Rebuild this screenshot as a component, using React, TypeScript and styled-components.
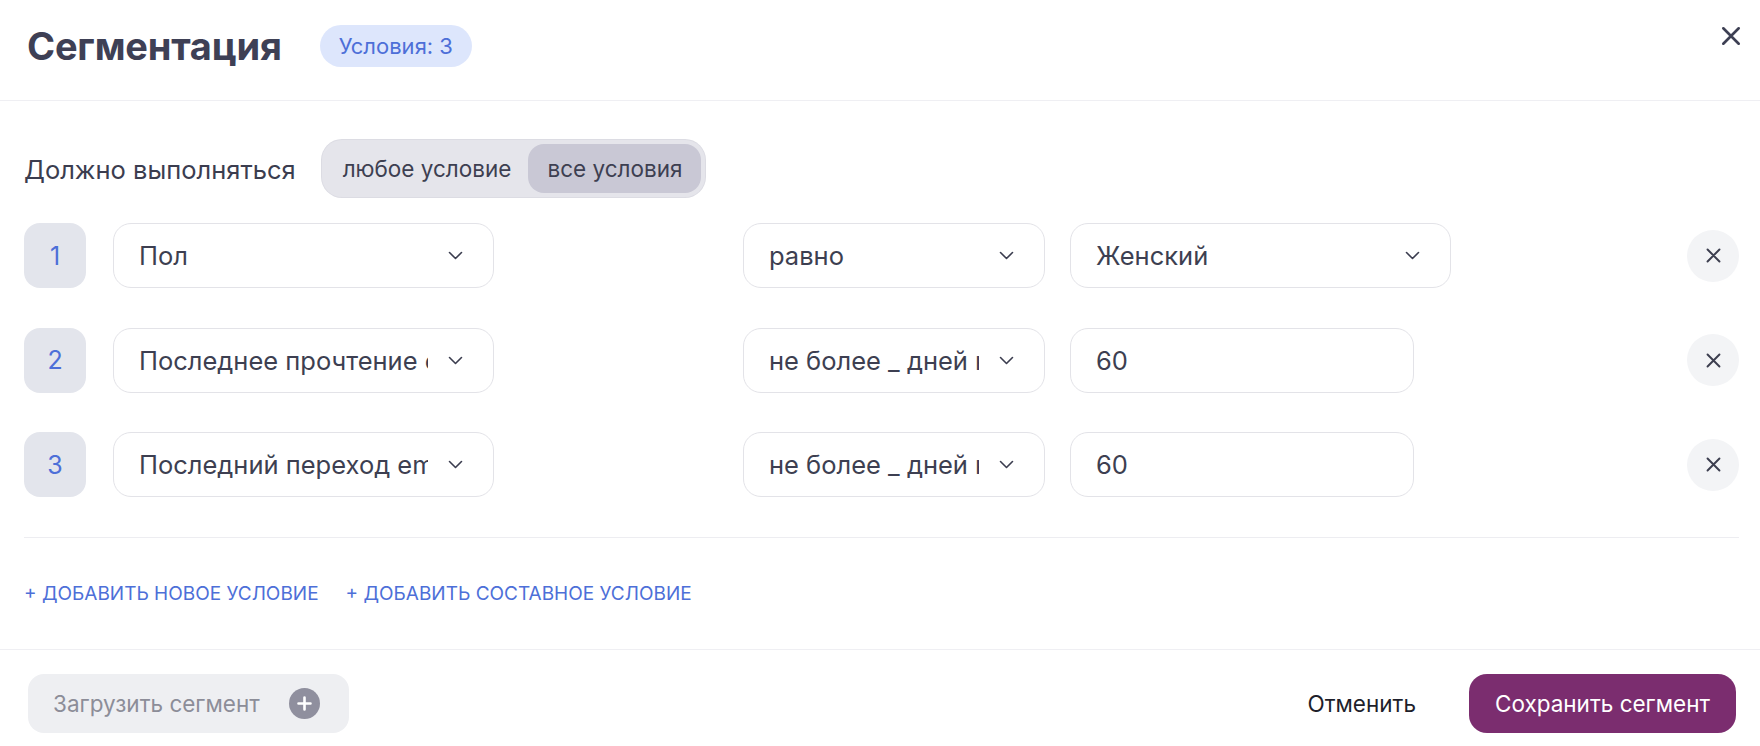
import React from "react";
import styled, { createGlobalStyle } from "styled-components";

const Global = createGlobalStyle`
  html, body { margin: 0; padding: 0; background: #ffffff; }
  body { font-family: Inter, "Noto Sans", "Liberation Sans", sans-serif; -webkit-font-smoothing: antialiased; }
  * { box-sizing: border-box; }
`;

const Modal = styled.div`
  width: 1760px;
  height: 746px;
  background: #fff;
  display: flex;
  flex-direction: column;
`;

const Header = styled.header`
  height: 101px;
  display: flex;
  align-items: center;
  padding: 0 13px 0 27px;
  border-bottom: 1px solid #efeff3;
`;

const Title = styled.h1`
  margin: 0;
  font-size: 38px;
  font-weight: 700;
  color: #3e4055;
  letter-spacing: -0.2px;
  margin-top: -9px;
`;

const Badge = styled.span`
  margin-left: 38px;
  margin-top: -9px;
  height: 42px;
  padding: 0 19px;
  border-radius: 21px;
  background: #dde6fc;
  color: #4d6fd8;
  font-size: 22px;
  display: inline-flex;
  align-items: center;
`;

const CloseButton = styled.button`
  margin-left: auto;
  margin-top: -28px;
  width: 32px;
  height: 32px;
  border: 0;
  background: transparent;
  padding: 0;
  display: flex;
  align-items: center;
  justify-content: center;
  color: #3d3f53;
`;

const Body = styled.section`
  padding: 39px 21px 0 24px;
  display: flex;
  flex-direction: column;
`;

const MatchRow = styled.div`
  display: flex;
  align-items: center;
  gap: 26px;
`;

const MatchLabel = styled.span`
  font-size: 25.5px;
  color: #3b3d4f;
  margin-top: 2px;
`;

const Toggle = styled.div`
  height: 57px;
  padding: 4px;
  border-radius: 20px;
  background: #e5e5eb;
  box-shadow: 0 0 0 1px #dcdce3;
  display: flex;
  align-items: stretch;
`;

const ToggleOption = styled.button<{ $active?: boolean }>`
  border: 0;
  font-family: inherit;
  font-size: 22.5px;
  color: #3d3f51;
  padding: 0 ${(p) => (p.$active ? 19 : 17)}px;
  border-radius: 16px;
  background: ${(p) => (p.$active ? "#c9c8d5" : "transparent")};
`;

const Conditions = styled.div`
  margin-top: 26px;
  display: flex;
  flex-direction: column;
  gap: 39.5px;
`;

const ConditionRow = styled.div`
  display: flex;
  align-items: center;
  height: 65px;
`;

const Num = styled.div`
  width: 62px;
  height: 65px;
  border-radius: 16px;
  background: #e3e5ec;
  color: #4d6fd8;
  font-size: 25px;
  display: flex;
  align-items: center;
  justify-content: center;
  margin-right: 27px;
`;

const Select = styled.div<{ $w: number; $ml?: number }>`
  width: ${(p) => p.$w}px;
  margin-left: ${(p) => p.$ml ?? 0}px;
  height: 65px;
  border: 1px solid #e3e3e8;
  border-radius: 18px;
  display: flex;
  align-items: center;
  padding: 0 30px 0 25px;
  gap: 20px;
  font-size: 25.5px;
  color: #3d3f51;
`;

const SelectText = styled.span`
  flex: 1;
  overflow: hidden;
  white-space: nowrap;
  text-overflow: clip;
`;

const Input = styled.div<{ $w: number; $ml?: number }>`
  width: ${(p) => p.$w}px;
  margin-left: ${(p) => p.$ml ?? 0}px;
  height: 65px;
  border: 1px solid #e3e3e8;
  border-radius: 18px;
  display: flex;
  align-items: center;
  padding: 0 25px;
  font-size: 25.5px;
  color: #3d3f51;
`;

const RemoveButton = styled.button`
  margin-left: auto;
  width: 52px;
  height: 52px;
  border-radius: 50%;
  border: 0;
  background: #f3f4f6;
  color: #3c3e4f;
  display: flex;
  align-items: center;
  justify-content: center;
  padding: 0;
`;

const Divider = styled.hr`
  margin: 40px 0 0;
  border: 0;
  border-top: 1px solid #ededf1;
`;

const Links = styled.div`
  display: flex;
  gap: 27px;
  height: 111px;
  align-items: center;
`;

const LinkButton = styled.button`
  border: 0;
  background: transparent;
  padding: 0;
  font-family: inherit;
  font-size: 19px;
  color: #4d6fd8;
  text-transform: uppercase;
`;

const Footer = styled.footer`
  border-top: 1px solid #efeff3;
  padding: 24px 24px 0 28px;
  display: flex;
  align-items: center;
`;

const LoadButton = styled.button`
  width: 321px;
  height: 59px;
  border: 0;
  border-radius: 16px;
  background: #eeeff2;
  font-family: inherit;
  font-size: 22.5px;
  color: #8c8d98;
  display: flex;
  align-items: center;
  padding: 0 29px 0 25px;
  justify-content: space-between;
`;

const CancelButton = styled.button`
  margin-left: auto;
  border: 0;
  background: transparent;
  font-family: inherit;
  font-size: 22.5px;
  color: #1e1f2b;
  padding: 0;
  margin-right: 53px;
`;

const SaveButton = styled.button`
  width: 267px;
  height: 59px;
  border: 0;
  border-radius: 18px;
  background: #7b2d6f;
  color: #fff;
  font-family: inherit;
  font-size: 22.5px;
`;

const Chevron = () => (
  <svg width="15" height="9" viewBox="0 0 15 9" fill="none">
    <polyline points="1.5,1.5 7.5,7.5 13.5,1.5" stroke="#3b3d4f" strokeWidth="1.6" strokeLinecap="round" strokeLinejoin="round" />
  </svg>
);

const XIcon = ({ size, sw }: { size: number; sw: number }) => (
  <svg width={size} height={size} viewBox="0 0 20 20" fill="none">
    <path d="M3 3L17 17M17 3L3 17" stroke="currentColor" strokeWidth={sw} strokeLinecap="round" />
  </svg>
);

const PlusCircle = () => (
  <svg width="31" height="31" viewBox="0 0 31 31">
    <circle cx="15.5" cy="15.5" r="15.5" fill="#8f8f9e" />
    <path d="M15.5 9.5V21.5M9.5 15.5H21.5" stroke="#fff" strokeWidth="2.6" strokeLinecap="round" />
  </svg>
);

type Cond = { field: string; op: string; value: string; valueIsSelect: boolean };

const conditions: Cond[] = [
  { field: "Пол", op: "равно", value: "Женский", valueIsSelect: true },
  { field: "Последнее прочтение email", op: "не более _ дней назад", value: "60", valueIsSelect: false },
  { field: "Последний переход email", op: "не более _ дней назад", value: "60", valueIsSelect: false },
];

export default function App() {
  return (
    <>
      <Global />
      <Modal>
        <Header>
          <Title>Сегментация</Title>
          <Badge>Условия: 3</Badge>
          <CloseButton aria-label="Закрыть">
            <XIcon size={22} sw={2.4} />
          </CloseButton>
        </Header>
        <Body>
          <MatchRow>
            <MatchLabel>Должно выполняться</MatchLabel>
            <Toggle>
              <ToggleOption>любое условие</ToggleOption>
              <ToggleOption $active>все условия</ToggleOption>
            </Toggle>
          </MatchRow>
          <Conditions>
            {conditions.map((c, i) => (
              <ConditionRow key={i}>
                <Num>{i + 1}</Num>
                <Select $w={381}>
                  <SelectText>{c.field}</SelectText>
                  <Chevron />
                </Select>
                <Select $w={302} $ml={249}>
                  <SelectText>{c.op}</SelectText>
                  <Chevron />
                </Select>
                {c.valueIsSelect ? (
                  <Select $w={381} $ml={25}>
                    <SelectText>{c.value}</SelectText>
                    <Chevron />
                  </Select>
                ) : (
                  <Input $w={344} $ml={25}>{c.value}</Input>
                )}
                <RemoveButton aria-label="Удалить">
                  <XIcon size={17} sw={2.3} />
                </RemoveButton>
              </ConditionRow>
            ))}
          </Conditions>
          <Divider />
          <Links>
            <LinkButton>+ Добавить новое условие</LinkButton>
            <LinkButton>+ Добавить составное условие</LinkButton>
          </Links>
        </Body>
        <Footer>
          <LoadButton>
            Загрузить сегмент
            <PlusCircle />
          </LoadButton>
          <CancelButton>Отменить</CancelButton>
          <SaveButton>Сохранить сегмент</SaveButton>
        </Footer>
      </Modal>
    </>
  );
}
